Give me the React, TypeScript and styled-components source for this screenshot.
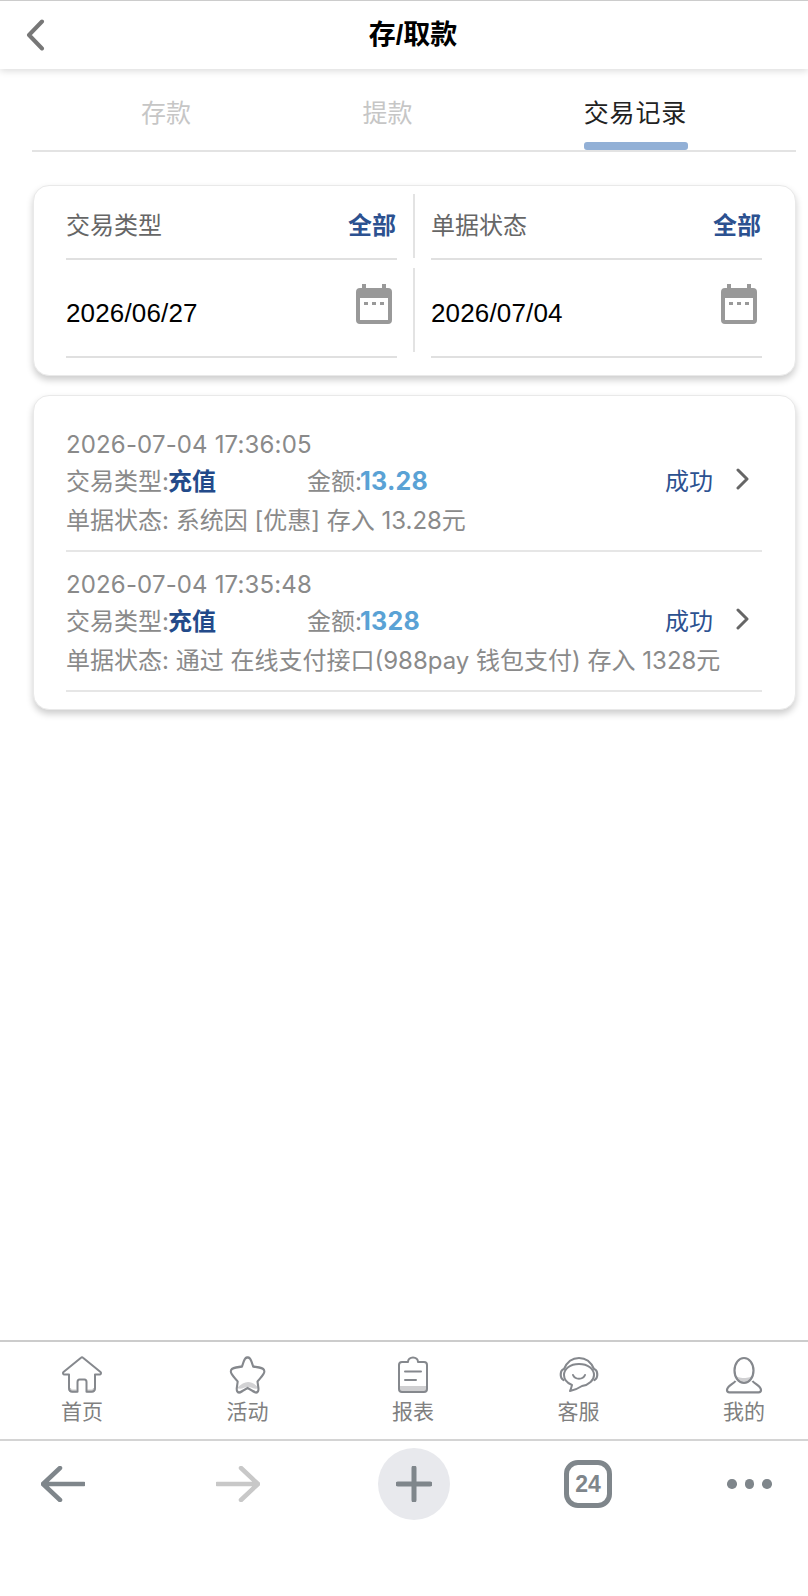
import React from 'react';
import styled, { createGlobalStyle } from 'styled-components';

const GlobalStyle = createGlobalStyle`
  html, body {
    margin: 0;
    padding: 0;
    background: #fff;
  }
  * {
    box-sizing: border-box;
  }
  body {
    font-family: Inter, "Noto Sans CJK SC", sans-serif;
  }
`;

const Page = styled.div`
  display: flex;
  flex-direction: column;
  width: 808px;
  height: 1596px;
  overflow: hidden;
  background: #fff;
`;

const Header = styled.header`
  position: relative;
  display: flex;
  flex: none;
  align-items: center;
  height: 69px;
  padding-left: 26px;
  border-top: 1px solid #ccc;
  background: #fff;
  box-shadow: 0 2px 7px rgba(0, 0, 0, 0.14);
`;

const BackIcon = styled.svg`
  display: block;
  width: 20px;
  height: 32px;
`;

const Title = styled.h1`
  position: absolute;
  left: 18px;
  right: 0;
  margin: 0;
  font-family: "Liberation Sans", "Noto Sans CJK SC", sans-serif;
  font-size: 27px;
  font-weight: 700;
  line-height: 70px;
  text-align: center;
  color: #000;
`;

const Main = styled.main`
  display: flex;
  flex: 1;
  flex-direction: column;
  padding: 0 12px 0 32px;
`;

const Tabs = styled.nav`
  display: flex;
  justify-content: space-between;
  height: 83px;
  padding: 0 109px;
  border-bottom: 2px solid #e3e3e3;
`;

const Tab = styled.div<{ $active?: boolean }>`
  position: relative;
  padding-top: 29px;
  font-size: 25px;
  line-height: 30px;
  letter-spacing: ${(p) => (p.$active ? '0.8px' : '0')};
  color: ${(p) => (p.$active ? '#222' : '#c6c6c6')};

  ${(p) =>
    p.$active &&
    `
    &::after {
      content: '';
      position: absolute;
      left: 0;
      right: -1px;
      bottom: 0;
      height: 8px;
      border-radius: 3px;
      background: #92b0d6;
    }
  `}
`;

const Card = styled.section`
  flex: none;
  margin-left: 1px;
  border: 1px solid #e9e9e9;
  border-radius: 16px;
  background: #fff;
  box-shadow: 0 4px 7px rgba(0, 0, 0, 0.2);
`;

const FilterCard = styled(Card)`
  display: grid;
  grid-template-columns: 1fr 1fr;
  grid-template-rows: 74px 98px;
  height: 191px;
  margin-top: 33px;
  padding: 0 33px 0 32px;
`;

const FilterCell = styled.div<{ $right?: boolean }>`
  position: relative;
  display: flex;
  align-items: center;
  justify-content: space-between;
  margin-left: ${(p) => (p.$right ? '17px' : '0')};
  margin-right: ${(p) => (p.$right ? '0' : '17px')};
  padding: 8px 1px 0 0;
  border-bottom: 2px solid #e0e0e0;

  ${(p) =>
    p.$right &&
    `
    &::before {
      content: '';
      position: absolute;
      left: -18px;
      top: 8px;
      bottom: 0;
      width: 2px;
      background: #e3e3e3;
    }
  `}
`;

const FilterLabel = styled.span`
  font-size: 24px;
  line-height: 30px;
  color: #666;
`;

const FilterValue = styled.span`
  font-size: 24px;
  font-weight: 700;
  line-height: 30px;
  color: #2c5190;
`;

const DateCell = styled(FilterCell)`
  padding: 0 5px 0 0;
  align-items: flex-start;

  &::before {
    bottom: 4px;
  }
`;

const DateText = styled.span`
  margin-top: 37px;
  font-family: "Liberation Sans", sans-serif;
  font-size: 26px;
  line-height: 32px;
  letter-spacing: 0.15px;
  color: #000;
`;

const CalendarIcon = styled.svg`
  display: block;
  width: 36px;
  height: 40px;
  margin-top: 24px;
`;

const ListCard = styled(Card)`
  height: 315px;
  margin-top: 19px;
  padding: 16px 33px 0 32px;
`;

const Record = styled.article`
  position: relative;
  height: 140px;
  padding-top: 14px;
  border-bottom: 2px solid #e6e6e6;
`;

const Time = styled.div`
  font-size: 24px;
  line-height: 38px;
  letter-spacing: 0.15px;
  color: #8a8a8a;
`;

const InfoRow = styled.div`
  display: flex;
  align-items: center;
  height: 38px;
  margin: -4px 0 4px;
  font-size: 24px;
  color: #8a8a8a;
`;

const InfoLeft = styled.div`
  width: 241px;
`;

const TypeValue = styled.b`
  margin-left: -1px;
  color: #234a8a;
`;

const Amount = styled.b`
  margin-left: -2px;
  font-size: 25px;
  letter-spacing: 0.3px;
  color: #5aa2d5;
`;

const Status = styled.div`
  position: absolute;
  right: 49px;
  top: 50px;
  font-size: 24px;
  line-height: 40px;
  color: #2c5190;
`;

const Chevron = styled.svg`
  position: absolute;
  right: 12px;
  top: 56px;
  display: block;
  width: 14px;
  height: 22px;
`;

const Detail = styled.div`
  font-size: 24px;
  line-height: 38px;
  color: #8a8a8a;
  white-space: nowrap;
`;

const NavBar = styled.nav`
  display: flex;
  flex: none;
  justify-content: space-between;
  height: 99px;
  padding: 13px 44px 0 62px;
  border-top: 2px solid #ccc;
`;

const NavItem = styled.div`
  display: flex;
  flex-direction: column;
  align-items: center;
  width: 40px;
`;

const NavIcon = styled.svg`
  display: block;
  flex: none;
  width: 44px;
  height: 40px;
`;

const NavLabel = styled.span`
  margin-top: 4px;
  font-size: 21px;
  line-height: 26px;
  white-space: nowrap;
  color: #808080;
`;

const BrowserBar = styled.div`
  display: grid;
  flex: none;
  grid-template-columns: 175px 162px 186px 163px auto;
  align-items: start;
  height: 157px;
  padding: 7px 0 0 41px;
  border-top: 2px solid #d4d4d4;
`;

const ArrowIcon = styled.svg`
  display: block;
  width: 44px;
  height: 36px;
  margin-top: 18px;
`;

const PlusButton = styled.div`
  display: flex;
  align-items: center;
  justify-content: center;
  width: 72px;
  height: 72px;
  border-radius: 50%;
  background: #e8e9ed;
`;

const PlusIcon = styled.svg`
  display: block;
  width: 36px;
  height: 36px;
`;

const TabCount = styled.div`
  display: flex;
  align-items: center;
  justify-content: center;
  width: 48px;
  height: 48px;
  margin-top: 12px;
  border: 5px solid #7f868b;
  border-radius: 14px;
  font-family: "Liberation Sans", sans-serif;
  font-size: 23px;
  font-weight: 700;
  color: #7f868b;
`;

const Dots = styled.div`
  display: flex;
  gap: 8px;
  margin-top: 31px;
`;

const Dot = styled.span`
  display: block;
  width: 9.5px;
  height: 9.5px;
  border-radius: 50%;
  background: #7f868b;
`;

const Calendar = () => (
  <CalendarIcon viewBox="0 0 36 40">
    <path
      fill="#999"
      fillRule="evenodd"
      d="M6 0h4v4h16V0h4v4h2a4 4 0 0 1 4 4v28a4 4 0 0 1-4 4H4a4 4 0 0 1-4-4V8a4 4 0 0 1 4-4h2zM4 14v22h28V14z"
    />
    <rect x="8" y="18" width="4" height="3" fill="#999" />
    <rect x="16" y="18" width="4" height="3" fill="#999" />
    <rect x="24" y="18" width="4" height="3" fill="#999" />
  </CalendarIcon>
);

const records = [
  {
    time: '2026-07-04 17:36:05',
    amount: '13.28',
    detail: '单据状态: 系统因 [优惠] 存入 13.28元',
  },
  {
    time: '2026-07-04 17:35:48',
    amount: '1328',
    detail: '单据状态: 通过 在线支付接口(988pay 钱包支付) 存入 1328元',
  },
];

const GRAY = '#85888d';

const navItems = [
  {
    label: '首页',
    icon: (
      <>
        <path d="M9.500 33c0 2 1 3 3 3h4M27 36h4.500c2 0 3-1 3-3" fill="none" stroke="#ccc" strokeWidth="3" />
        <path
          d="M9 19.500V33c0 2.500 1 3.700 3.500 3.700H17.500V27c0-1.500 1-2.500 2-2.500h5c1 0 2 1 2 2.500v9.700h5c2.500 0 3.500-1.200 3.500-3.700V19.500h4.500c1.500 0 2-1.500 1-2.500L23 2.700a1.500 1.500 0 0 0-2 0L3.500 17c-1 1-.5 2.500 1 2.500z"
          fill="none"
          stroke={GRAY}
          strokeWidth="2"
          strokeLinejoin="round"
        />
      </>
    ),
  },
  {
    label: '活动',
    icon: (
      <g transform="translate(3.100 0) scale(0.86 1)">
        <path d="M9 33c5-4 9-6 13-6s8 2 13 6c-5 2-9-1-13-1s-8 3-13 1z" fill="#d2d2d4" />
        <path
          d="M22 2.500c2 0 3 1.500 4 4l2 5 7 1c4 .5 6 2 6 4 0 2-2 4-5 7l-3 3 1 6c.5 3-.5 5-2.500 5-1.500 0-3-1-5-2l-5-2.500-5 2.500c-2 1-3.500 2-5 2-2 0-3-2-2.500-5l1-6-3-3c-3-3-5-5-5-7 0-2 2-3.500 6-4l7-1 2-5c1-2.500 2-4 4-4z"
          fill="none"
          stroke={GRAY}
          strokeWidth="2.400"
          strokeLinejoin="round"
        />
      </g>
    ),
  },
  {
    label: '报表',
    icon: (
      <>
        <path d="M8 31h28v3c0 2-1 3-3 3H11c-2 0-3-1-3-3z" fill="#cfcfd1" />
        <path
          d="M17 7h-6c-2 0-3 1-3 3v24c0 2 1 3 3 3h22c2 0 3-1 3-3V10c0-2-1-3-3-3h-6c0-2.500-2-4.500-5-4.500s-5 2-5 4.500z"
          fill="none"
          stroke={GRAY}
          strokeWidth="2"
          strokeLinejoin="round"
        />
        <path d="M14 16.500h16M14 25h11" stroke={GRAY} strokeWidth="2" strokeLinecap="round" />
      </>
    ),
  },
  {
    label: '客服',
    icon: (
      <>
        <path
          d="M7 14C10 7 15 3 22 3s12 4 15 11"
          fill="none"
          stroke={GRAY}
          strokeWidth="2"
        />
        <path
          d="M7 14c-4 1-4.500 9-.5 11M37 14c4 1 4.500 9 .5 11"
          fill="none"
          stroke={GRAY}
          strokeWidth="2.200"
          strokeLinecap="round"
        />
        <path
          d="M22 9C13 9 7 14 7 20c0 4 3 8 8 10-.5 2-1 4-2 6 5-1 9-3 12-5 7-1 12-6 12-11C37 14 31 9 22 9z"
          fill="none"
          stroke={GRAY}
          strokeWidth="2"
          strokeLinejoin="round"
        />
        <path d="M16 20c2 5 10 5 12 0" fill="none" stroke={GRAY} strokeWidth="2" strokeLinecap="round" />
      </>
    ),
  },
  {
    label: '我的',
    icon: (
      <>
        <path d="M13 20c2 4 16 4 18 0-1 5-5 8-9 8s-8-3-9-8z" fill="#d0d0d2" />
        <ellipse cx="22" cy="15.500" rx="9.500" ry="12.500" fill="none" stroke={GRAY} strokeWidth="2.200" />
        <path
          d="M13.500 26c-2 3-8.500 5-8.500 9 0 1.500 1 2.300 2.500 2.300h29c1.500 0 2.500-.8 2.500-2.300 0-4-6.500-6-8.500-9"
          fill="none"
          stroke={GRAY}
          strokeWidth="2.200"
          strokeLinejoin="round"
        />
      </>
    ),
  },
];

const App: React.FC = () => (
  <Page>
    <GlobalStyle />
    <Header>
      <BackIcon viewBox="0 0 20 32">
        <path
          d="M16 2.500 3 16l13 13.500"
          fill="none"
          stroke="#777"
          strokeWidth="4"
          strokeLinecap="round"
          strokeLinejoin="round"
        />
      </BackIcon>
      <Title>存/取款</Title>
    </Header>

    <Main>
      <Tabs>
        <Tab>存款</Tab>
        <Tab>提款</Tab>
        <Tab $active>交易记录</Tab>
      </Tabs>

      <FilterCard>
        <FilterCell>
          <FilterLabel>交易类型</FilterLabel>
          <FilterValue>全部</FilterValue>
        </FilterCell>
        <FilterCell $right>
          <FilterLabel>单据状态</FilterLabel>
          <FilterValue>全部</FilterValue>
        </FilterCell>
        <DateCell>
          <DateText>2026/06/27</DateText>
          <Calendar />
        </DateCell>
        <DateCell $right>
          <DateText>2026/07/04</DateText>
          <Calendar />
        </DateCell>
      </FilterCard>

      <ListCard>
        {records.map((r) => (
          <Record key={r.time}>
            <Time>{r.time}</Time>
            <InfoRow>
              <InfoLeft>
                交易类型:<TypeValue>充值</TypeValue>
              </InfoLeft>
              <div>
                金额:<Amount>{r.amount}</Amount>
              </div>
            </InfoRow>
            <Status>成功</Status>
            <Chevron viewBox="0 0 14 22">
              <path
                d="M2 2l9 9-9 9"
                fill="none"
                stroke="#666"
                strokeWidth="3"
                strokeLinecap="round"
                strokeLinejoin="round"
              />
            </Chevron>
            <Detail>{r.detail}</Detail>
          </Record>
        ))}
      </ListCard>
    </Main>

    <NavBar>
      {navItems.map((item) => (
        <NavItem key={item.label}>
          <NavIcon viewBox="0 0 44 40">{item.icon}</NavIcon>
          <NavLabel>{item.label}</NavLabel>
        </NavItem>
      ))}
    </NavBar>

    <BrowserBar>
      <ArrowIcon viewBox="0 0 44 36">
        <path
          d="M43 18H2M19 2 2 18l17 16"
          fill="none"
          stroke="#7f868b"
          strokeWidth="4.500"
          strokeLinecap="round"
          strokeLinejoin="round"
        />
      </ArrowIcon>
      <ArrowIcon viewBox="0 0 44 36">
        <path
          d="M1 18h41M25 2l17 16-17 16"
          fill="none"
          stroke="#c8c8c8"
          strokeWidth="4.500"
          strokeLinecap="round"
          strokeLinejoin="round"
        />
      </ArrowIcon>
      <PlusButton>
        <PlusIcon viewBox="0 0 36 36">
          <path d="M18 2v32M2 18h32" stroke="#7f868b" strokeWidth="5" strokeLinecap="round" />
        </PlusIcon>
      </PlusButton>
      <TabCount>24</TabCount>
      <Dots>
        <Dot />
        <Dot />
        <Dot />
      </Dots>
    </BrowserBar>
  </Page>
);

export default App;
